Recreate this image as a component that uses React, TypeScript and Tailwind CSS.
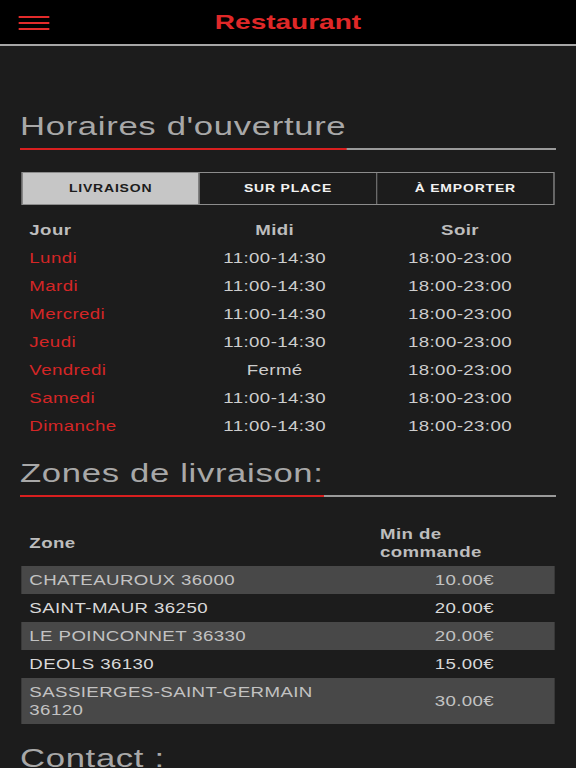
import React from "react";

const hours = [
  { day: "Lundi", midi: "11:00-14:30", soir: "18:00-23:00" },
  { day: "Mardi", midi: "11:00-14:30", soir: "18:00-23:00" },
  { day: "Mercredi", midi: "11:00-14:30", soir: "18:00-23:00" },
  { day: "Jeudi", midi: "11:00-14:30", soir: "18:00-23:00" },
  { day: "Vendredi", midi: "Fermé", soir: "18:00-23:00" },
  { day: "Samedi", midi: "11:00-14:30", soir: "18:00-23:00" },
  { day: "Dimanche", midi: "11:00-14:30", soir: "18:00-23:00" },
];

const zones: { name: React.ReactNode; min: string }[] = [
  { name: "CHATEAUROUX 36000", min: "10.00€" },
  { name: "SAINT-MAUR 36250", min: "20.00€" },
  { name: "LE POINCONNET 36330", min: "20.00€" },
  { name: "DEOLS 36130", min: "15.00€" },
  {
    name: (
      <>
        SASSIERGES-SAINT-GERMAIN
        <br />
        36120
      </>
    ),
    min: "30.00€",
  },
];

function SectionTitle({ children, className = "" }: { children: React.ReactNode; className?: string }) {
  return (
    <div className={`mx-[15px] border-b-2 border-[#9a9a9a] ${className}`}>
      <h2 className="-mb-[2px] inline-block border-b-2 border-[#d81f1f] pb-[6px] text-[26px] leading-[32px] tracking-[0.5px] text-[#a8a8a8]">
        {children}
      </h2>
    </div>
  );
}

export default function App() {
  const tabs = ["LIVRAISON", "SUR PLACE", "À EMPORTER"];
  return (
    <div className="min-h-screen overflow-hidden bg-[#1c1c1c]">
      <div className="w-[432px] origin-top-left scale-x-[1.3333] font-['Liberation_Sans',Arial,sans-serif]">
        {/* Header */}
        <header className="grid h-[46px] grid-cols-[1fr_auto_1fr] items-center border-b-2 border-[#a6a6a6] bg-black">
          <div className="flex flex-col gap-[4px] pl-[14px] pt-[1px]">
            <span className="block h-[2px] w-[23px] bg-[#e32b2b]" />
            <span className="block h-[2px] w-[23px] bg-[#e32b2b]" />
            <span className="block h-[2px] w-[23px] bg-[#e32b2b]" />
          </div>
          <h1 className="text-[21px] font-bold leading-[44px] text-[#e02828]">Restaurant</h1>
          <div />
        </header>

        {/* Horaires */}
        <SectionTitle className="mt-[64px]">Horaires d'ouverture</SectionTitle>

        <div className="mx-[16px] mt-[22px] flex h-[33px] border border-[#8c8c8c]">
          {tabs.map((t, i) => (
            <div
              key={t}
              className={`flex flex-1 items-center justify-center text-[10.5px] font-bold tracking-[0.6px] ${
                i === 0 ? "bg-[#c6c6c6] text-[#1c1c1c]" : "border-l border-[#6a6a6a] text-[#f2f2f2]"
              }`}
            >
              {t}
            </div>
          ))}
        </div>

        <div className="mx-[16px] mt-[11px] text-[14px] tracking-[0.3px]">
          <div className="grid h-[28px] grid-cols-[122px_136px_142px] items-center font-bold text-[#bdbdbd]">
            <div className="pl-[6px]">Jour</div>
            <div className="text-center">Midi</div>
            <div className="text-center">Soir</div>
          </div>
          {hours.map((h) => (
            <div key={h.day} className="grid h-[28px] grid-cols-[122px_136px_142px] items-center">
              <div className="pl-[6px] text-[#d42626]">{h.day}</div>
              <div className="text-center text-[#cdcdcd]">{h.midi}</div>
              <div className="text-center text-[#cdcdcd]">{h.soir}</div>
            </div>
          ))}
        </div>

        {/* Zones */}
        <SectionTitle className="mt-[17px]">Zones de livraison:</SectionTitle>

        <div className="mx-[16px] mt-[23px] text-[14px] leading-[18px] tracking-[0.3px]">
          <div className="grid grid-cols-[269px_131px] items-center py-[5px] font-bold text-[#bdbdbd]">
            <div className="pl-[6px]">Zone</div>
            <div>
              Min de
              <br />
              commande
            </div>
          </div>
          {zones.map((z, i) => (
            <div
              key={i}
              className={`grid grid-cols-[269px_131px] items-center py-[5px] ${
                i % 2 === 0 ? "bg-[#484848] text-[#c2c2c2]" : "text-[#d8d8d8]"
              }`}
            >
              <div className="pl-[6px]">{z.name}</div>
              <div className="pl-[41px]">{z.min}</div>
            </div>
          ))}
        </div>

        {/* Contact */}
        <SectionTitle className="mt-[18px]">Contact :</SectionTitle>
        <div className="mx-[16px] mt-[20px] pb-[40px] text-[14px] leading-[22px] tracking-[0.3px] text-[#cdcdcd]">
          <p>Restaurant</p>
          <p>36000 Châteauroux</p>
        </div>
      </div>
    </div>
  );
}
